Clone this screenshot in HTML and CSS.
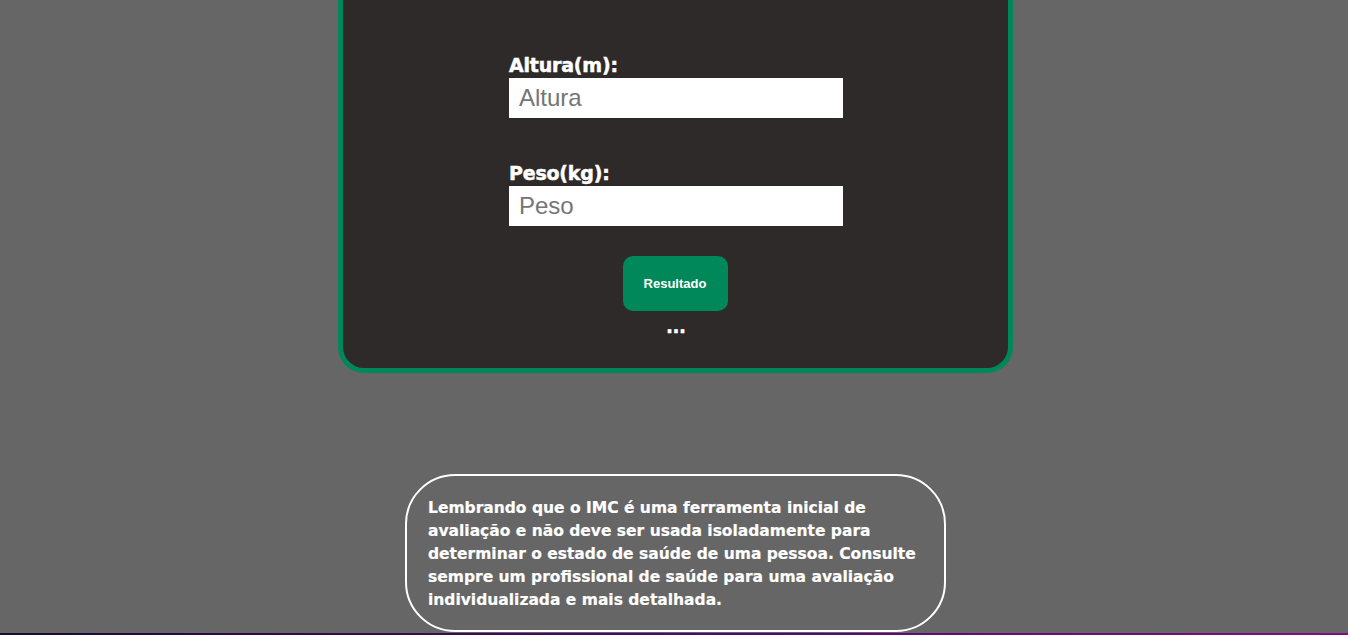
FILE: index.html
```html
<!DOCTYPE html>
<html lang="pt-BR">
<head>
<meta charset="utf-8">
<title>Calculadora de IMC</title>
<link rel="stylesheet" href="styles.css">
</head>
<body>
<main class="page">
  <section class="card">
    <form class="form">
      <label class="label" for="altura">Altura(m):</label>
      <input class="field" id="altura" type="text" placeholder="Altura">
      <label class="label label-second" for="peso">Peso(kg):</label>
      <input class="field" id="peso" type="text" placeholder="Peso">
      <button class="btn" type="button">Resultado</button>
      <p class="result">...</p>
    </form>
  </section>
  <aside class="notice">
    <p>Lembrando que o IMC é uma ferramenta inicial de avaliação e não deve ser usada isoladamente para determinar o estado de saúde de uma pessoa. Consulte sempre um profissional de saúde para uma avaliação individualizada e mais detalhada.</p>
  </aside>
</main>
<footer class="footer"></footer>
</body>
</html>
```

FILE: styles.css
```css
html, body {
  margin: 0;
  padding: 0;
  height: 635px;
  overflow: hidden;
}

body {
  background: #666666;
  font-family: "DejaVu Sans", sans-serif;
  color: #ffffff;
  display: flex;
  flex-direction: column;
}

.page {
  display: flex;
  flex-direction: column;
  align-items: center;
  padding-left: 3px;
}

.card {
  box-sizing: border-box;
  width: 675px;
  background: #2e2a29;
  border: 5px solid #00875a;
  border-top: none;
  border-radius: 0 0 26px 26px;
  padding: 54px 0 31px;
  display: flex;
  justify-content: center;
}

.form {
  width: 334px;
  display: flex;
  flex-direction: column;
  align-items: stretch;
  margin-left: 1px;
}

.label {
  display: block;
  font-family: "DejaVu Sans", sans-serif;
  font-weight: bold;
  font-size: 19px;
  line-height: 22px;
  margin-bottom: 2px;
  color: #ffffff;
  letter-spacing: -0.2px;
  -webkit-text-stroke: 0.5px #ffffff;
}

.label-second {
  margin-top: 44px;
}

.field {
  box-sizing: border-box;
  width: 334px;
  height: 40px;
  border: none;
  outline: none;
  border-radius: 0;
  padding: 0 10px;
  font-family: "Liberation Sans", Arial, sans-serif;
  font-size: 24px;
  color: #333;
  background: #ffffff;
}

.field::placeholder {
  color: #757575;
}

.btn {
  align-self: center;
  margin-top: 30px;
  margin-right: 2px;
  width: 105px;
  height: 55px;
  border: none;
  border-radius: 10px;
  background: #00875a;
  color: #ffffff;
  font-family: "Liberation Sans", Arial, sans-serif;
  font-weight: bold;
  font-size: 13px;
  padding: 0;
}

.result {
  margin: 6px 0 0;
  text-align: center;
  font-family: "DejaVu Sans", sans-serif;
  font-weight: bold;
  font-size: 17px;
  line-height: 20px;
  color: #ffffff;
  -webkit-text-stroke: 0.6px #ffffff;
}

.notice {
  box-sizing: border-box;
  margin-top: 101px;
  width: 541px;
  height: 158px;
  border: 2px solid #ffffff;
  border-radius: 50px;
  padding: 21px 21px 0 21px;
}

.notice p {
  margin: 0;
  font-family: "DejaVu Sans", sans-serif;
  font-weight: bold;
  font-size: 15.5px;
  line-height: 23px;
  color: #ffffff;
  -webkit-text-stroke: 0.2px #ffffff;
}

.footer {
  margin-top: 1px;
  height: 2px;
  background: linear-gradient(to right, #1a0a30, #4a0a6a 50%, #850a8a);
}
```
